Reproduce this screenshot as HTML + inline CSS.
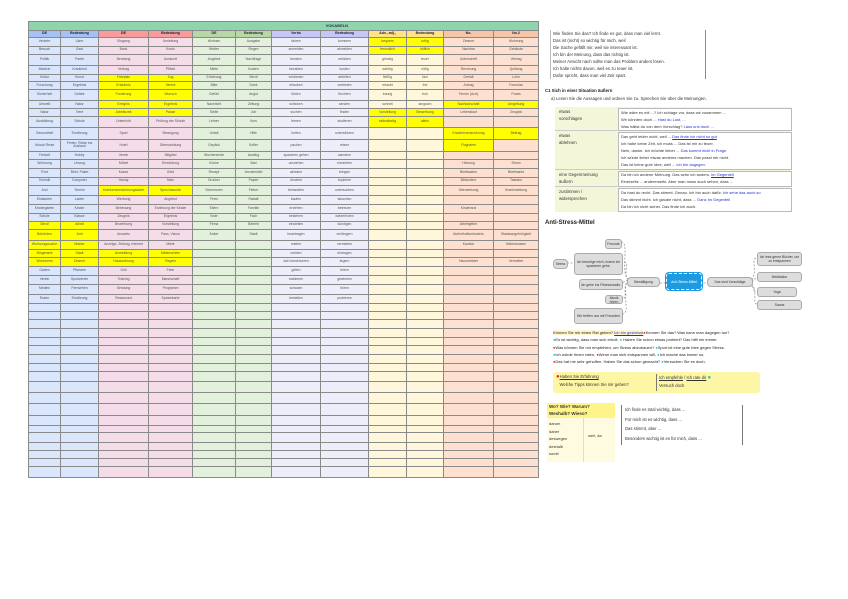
<!DOCTYPE html>
<html><head><meta charset="utf-8">
<style>
body{margin:0;width:848px;height:599px;background:#fff;position:relative;overflow:hidden;font-family:"Liberation Sans",sans-serif;}
#t{position:absolute;left:28px;top:21px;width:511px;border-collapse:collapse;table-layout:fixed;font-size:3.4px;color:#555;}
#t td{border:1px solid #8a8a8a;padding:0;text-align:center;overflow:hidden;line-height:1.1;}
#t tr.ti td{background:#8ed4ac;color:#335;font-weight:bold;font-size:4px;}
#t tr.h td{font-weight:bold;color:#223;font-size:3.6px}
.c0{background:#d9e6fb}.c1{background:#f4dde9}.c2{background:#e3f0dc}.c3{background:#eeeefb}.c4{background:#fff7dc}.c5{background:#fde0cf}
.h0{background:#a4c2f4!important}.h1{background:#f79b9b!important}.h2{background:#b7d8a6!important}.h3{background:#c5c8f6!important}.h4{background:#ffe28a!important}.h5{background:#f6c6aa!important}
#t td.y{background:#ffff00}
.ab{position:absolute;}
.tx{font-size:4.3px;color:#333;line-height:7px;white-space:nowrap}
.nd{position:absolute;background:#ddd;border:1px solid #aaa;border-radius:3px;font-size:3.4px;color:#333;text-align:center;display:flex;align-items:center;justify-content:center}
</style></head><body>
<table id="t">
<colgroup><col style="width:32px"><col style="width:38px"><col style="width:50px"><col style="width:44px"><col style="width:43px"><col style="width:36px"><col style="width:49px"><col style="width:48px"><col style="width:38px"><col style="width:37px"><col style="width:50px"><col style="width:45px"></colgroup>
<tr class="ti" style="height:8.7px"><td colspan="12" style="text-align:right;padding-right:190px">VOKABELN</td></tr>
<tr class="h" style="height:7.3px"><td class="h0">DE</td><td class="h0">Bedeutung</td><td class="h1">DE</td><td class="h1">Bedeutung</td><td class="h2">DE</td><td class="h2">Bedeutung</td><td class="h3">Verbs</td><td class="h3">Bedeutung</td><td class="h4">Adv., adj.,</td><td class="h4">Bedeutung</td><td class="h5">No.</td><td class="h5">No.2</td></tr>
<tr style="height:8.7px"><td class="c0">Verkehr</td><td class="c0">Lärm</td><td class="c1">Eingang</td><td class="c1">Umleitung</td><td class="c2">Wohnen</td><td class="c2">Ausgabe</td><td class="c3">fahren</td><td class="c3">kommen</td><td class="y">bequem</td><td class="y">ruhig</td><td class="c5">Zimmer</td><td class="c5">Wohnung</td></tr>
<tr style="height:8px"><td class="c0">Besuch</td><td class="c0">Gast</td><td class="c1">Bank</td><td class="c1">Konto</td><td class="c2">Wetter</td><td class="c2">Regen</td><td class="c3">anmelden</td><td class="c3">abmelden</td><td class="y">freundlich</td><td class="y">höflich</td><td class="c5">Nachbar</td><td class="c5">Gebäude</td></tr>
<tr style="height:11.3px"><td class="c0">Politik</td><td class="c0">Partei</td><td class="c1">Beratung</td><td class="c1">Auskunft</td><td class="c2">Angebot</td><td class="c2">Nachfrage</td><td class="c3">beraten</td><td class="c3">erklären</td><td class="c4">günstig</td><td class="c4">teuer</td><td class="c5">Unterschrift</td><td class="c5">Vertrag</td></tr>
<tr style="height:8.7px"><td class="c0">Medizin</td><td class="c0">Krankheit</td><td class="c1">Vertrag</td><td class="c1">Pflicht</td><td class="c2">Miete</td><td class="c2">Kosten</td><td class="c3">bezahlen</td><td class="c3">kosten</td><td class="c4">wichtig</td><td class="c4">nötig</td><td class="c5">Rechnung</td><td class="c5">Quittung</td></tr>
<tr style="height:7.3px"><td class="c0">Kultur</td><td class="c0">Kunst</td><td class="y">Fahrplan</td><td class="y">Zug</td><td class="c2">Erfahrung</td><td class="c2">Beruf</td><td class="c3">verdienen</td><td class="c3">arbeiten</td><td class="c4">fleißig</td><td class="c4">faul</td><td class="c5">Gehalt</td><td class="c5">Lohn</td></tr>
<tr style="height:8px"><td class="c0">Forschung</td><td class="c0">Ergebnis</td><td class="y">Erlaubnis</td><td class="y">Verbot</td><td class="c2">Bitte</td><td class="c2">Dank</td><td class="c3">erlauben</td><td class="c3">verbieten</td><td class="c4">erlaubt</td><td class="c4">frei</td><td class="c5">Antrag</td><td class="c5">Formular</td></tr>
<tr style="height:11px"><td class="c0">Sicherheit</td><td class="c0">Gefahr</td><td class="y">Forderung</td><td class="y">Wunsch</td><td class="c2">Gefühl</td><td class="c2">Angst</td><td class="c3">fühlen</td><td class="c3">fürchten</td><td class="c4">traurig</td><td class="c4">froh</td><td class="c5">Termin (Arzt)</td><td class="c5">Praxis</td></tr>
<tr style="height:8px"><td class="c0">Umwelt</td><td class="c0">Natur</td><td class="y">Ereignis</td><td class="y">Ergebnis</td><td class="c2">Nachricht</td><td class="c2">Zeitung</td><td class="c3">schicken</td><td class="c3">senden</td><td class="c4">schnell</td><td class="c4">langsam</td><td class="y">Nachbarschaft</td><td class="y">Umgebung</td></tr>
<tr style="height:8px"><td class="c0">Natur</td><td class="c0">Tiere</td><td class="y">Arbeitszeit</td><td class="y">Pause</td><td class="c2">Stelle</td><td class="c2">Job</td><td class="c3">suchen</td><td class="c3">finden</td><td class="y">Vorstellung</td><td class="y">Bewerbung</td><td class="c5">Lebenslauf</td><td class="c5">Zeugnis</td></tr>
<tr style="height:11.5px"><td class="c0">Ausbildung</td><td class="c0">Schule</td><td class="c1">Unterricht</td><td class="c1">Prüfung der Schule</td><td class="c2">Lehrer</td><td class="c2">Kurs</td><td class="c3">lernen</td><td class="c3">studieren</td><td class="y">selbständig</td><td class="y">allein</td><td class="c5"></td><td class="c5"></td></tr>
<tr style="height:11.8px"><td class="c0">Gesundheit</td><td class="c0">Ernährung</td><td class="c1">Sport</td><td class="c1">Bewegung</td><td class="c2">Unfall</td><td class="c2">Hilfe</td><td class="c3">helfen</td><td class="c3">unterstützen</td><td class="c4"></td><td class="c4"></td><td class="y">Krankenversicherung</td><td class="y">Beitrag</td></tr>
<tr style="height:11.4px"><td class="c0">Urlaub Reise</td><td class="c0">Ferien, Reise ins Ausland</td><td class="c1">Hotel</td><td class="c1">Übernachtung</td><td class="c2">Gepäck</td><td class="c2">Koffer</td><td class="c3">packen</td><td class="c3">reisen</td><td class="c4"></td><td class="c4"></td><td class="y">Flughafen</td><td class="c5"></td></tr>
<tr style="height:8.6px"><td class="c0">Freizeit</td><td class="c0">Hobby</td><td class="c1">Verein</td><td class="c1">Mitglied</td><td class="c2">Wochenende</td><td class="c2">Ausflug</td><td class="c3">spazieren gehen</td><td class="c3">wandern</td><td class="c4"></td><td class="c4"></td><td class="c5"></td><td class="c5"></td></tr>
<tr style="height:8.4px"><td class="c0">Wohnung</td><td class="c0">Umzug</td><td class="c1">Möbel</td><td class="c1">Einrichtung</td><td class="c2">Küche</td><td class="c2">Bad</td><td class="c3">umziehen</td><td class="c3">einrichten</td><td class="c4"></td><td class="c4"></td><td class="c5">Heizung</td><td class="c5">Strom</td></tr>
<tr style="height:9px"><td class="c0">Post</td><td class="c0">Brief, Paket</td><td class="c1">Kasse</td><td class="c1">Geld</td><td class="c2">Rezept</td><td class="c2">Arzneimittel</td><td class="c3">abholen</td><td class="c3">bringen</td><td class="c4"></td><td class="c4"></td><td class="c5">Briefkasten</td><td class="c5">Briefmarke</td></tr>
<tr style="height:8.3px"><td class="c0">Technik</td><td class="c0">Computer</td><td class="c1">Handy</td><td class="c1">Netz</td><td class="c2">Drucker</td><td class="c2">Papier</td><td class="c3">drucken</td><td class="c3">kopieren</td><td class="c4"></td><td class="c4"></td><td class="c5">Bildschirm</td><td class="c5">Tastatur</td></tr>
<tr style="height:10px"><td class="c0">Arzt</td><td class="c0">Termin</td><td class="y">Krankenversicherungskarte</td><td class="y">Sprechstunde</td><td class="c2">Schmerzen</td><td class="c2">Fieber</td><td class="c3">behandeln</td><td class="c3">untersuchen</td><td class="c4"></td><td class="c4"></td><td class="c5">Überweisung</td><td class="c5">Krankmeldung</td></tr>
<tr style="height:9px"><td class="c0">Einkaufen</td><td class="c0">Laden</td><td class="c1">Werbung</td><td class="c1">Angebot</td><td class="c2">Preis</td><td class="c2">Rabatt</td><td class="c3">kaufen</td><td class="c3">tauschen</td><td class="c4"></td><td class="c4"></td><td class="c5"></td><td class="c5"></td></tr>
<tr style="height:8.7px"><td class="c0">Kindergarten</td><td class="c0">Kinder</td><td class="c1">Betreuung</td><td class="c1">Erziehung der Kinder</td><td class="c2">Eltern</td><td class="c2">Familie</td><td class="c3">erziehen</td><td class="c3">betreuen</td><td class="c4"></td><td class="c4"></td><td class="c5">Kinderarzt</td><td class="c5"></td></tr>
<tr style="height:8px"><td class="c0">Schule</td><td class="c0">Klasse</td><td class="c1">Zeugnis</td><td class="c1">Ergebnis</td><td class="c2">Note</td><td class="c2">Fach</td><td class="c3">bestehen</td><td class="c3">wiederholen</td><td class="c4"></td><td class="c4"></td><td class="c5"></td><td class="c5"></td></tr>
<tr style="height:8.3px"><td class="y">Beruf</td><td class="y">Arbeit</td><td class="c1">Bewerbung</td><td class="c1">Vorstellung</td><td class="c2">Firma</td><td class="c2">Betrieb</td><td class="c3">einstellen</td><td class="c3">kündigen</td><td class="c4"></td><td class="c4"></td><td class="c5">Arbeitgeber</td><td class="c5"></td></tr>
<tr style="height:11px"><td class="y">Behörden</td><td class="y">Amt</td><td class="c1">Ausweis</td><td class="c1">Pass, Visum</td><td class="c2">Ämter</td><td class="c2">Stadt</td><td class="c3">beantragen</td><td class="c3">verlängern</td><td class="c4"></td><td class="c4"></td><td class="c5">Aufenthaltserlaubnis</td><td class="c5">Staatsangehörigkeit</td></tr>
<tr style="height:9px"><td class="y">Wohnungssuche</td><td class="y">Makler</td><td class="c1">Anzeige, Zeitung, Internet</td><td class="c1">Miete</td><td class="c2"></td><td class="c2"></td><td class="c3">mieten</td><td class="c3">vermieten</td><td class="c4"></td><td class="c4"></td><td class="c5">Kaution</td><td class="c5">Nebenkosten</td></tr>
<tr style="height:8px"><td class="y">Bürgeramt</td><td class="y">Stadt</td><td class="y">Anmeldung</td><td class="y">Meldeschein</td><td class="c2"></td><td class="c2"></td><td class="c3">melden</td><td class="c3">eintragen</td><td class="c4"></td><td class="c4"></td><td class="c5"></td><td class="c5"></td></tr>
<tr style="height:9px"><td class="y">Wohnheim</td><td class="y">Zimmer</td><td class="y">Hausordnung</td><td class="y">Regeln</td><td class="c2"></td><td class="c2"></td><td class="c3">sich beschweren</td><td class="c3">ärgern</td><td class="c4"></td><td class="c4"></td><td class="c5">Hausmeister</td><td class="c5">Vermieter</td></tr>
<tr style="height:9px"><td class="c0">Garten</td><td class="c0">Pflanzen</td><td class="c1">Grill</td><td class="c1">Feier</td><td class="c2"></td><td class="c2"></td><td class="c3">grillen</td><td class="c3">feiern</td><td class="c4"></td><td class="c4"></td><td class="c5"></td><td class="c5"></td></tr>
<tr style="height:9px"><td class="c0">Verein</td><td class="c0">Sportverein</td><td class="c1">Training</td><td class="c1">Mannschaft</td><td class="c2"></td><td class="c2"></td><td class="c3">trainieren</td><td class="c3">gewinnen</td><td class="c4"></td><td class="c4"></td><td class="c5"></td><td class="c5"></td></tr>
<tr style="height:9.7px"><td class="c0">Medien</td><td class="c0">Fernsehen</td><td class="c1">Sendung</td><td class="c1">Programm</td><td class="c2"></td><td class="c2"></td><td class="c3">schauen</td><td class="c3">hören</td><td class="c4"></td><td class="c4"></td><td class="c5"></td><td class="c5"></td></tr>
<tr style="height:9.3px"><td class="c0">Essen</td><td class="c0">Ernährung</td><td class="c1">Restaurant</td><td class="c1">Speisekarte</td><td class="c2"></td><td class="c2"></td><td class="c3">bestellen</td><td class="c3">probieren</td><td class="c4"></td><td class="c4"></td><td class="c5"></td><td class="c5"></td></tr>
<tr style="height:8px"><td class="c0"></td><td class="c0"></td><td class="c1"></td><td class="c1"></td><td class="c2"></td><td class="c2"></td><td class="c3"></td><td class="c3"></td><td class="c4"></td><td class="c4"></td><td class="c5"></td><td class="c5"></td></tr>
<tr style="height:8px"><td class="c0"></td><td class="c0"></td><td class="c1"></td><td class="c1"></td><td class="c2"></td><td class="c2"></td><td class="c3"></td><td class="c3"></td><td class="c4"></td><td class="c4"></td><td class="c5"></td><td class="c5"></td></tr>
<tr style="height:9px"><td class="c0"></td><td class="c0"></td><td class="c1"></td><td class="c1"></td><td class="c2"></td><td class="c2"></td><td class="c3"></td><td class="c3"></td><td class="c4"></td><td class="c4"></td><td class="c5"></td><td class="c5"></td></tr>
<tr style="height:8.7px"><td class="c0"></td><td class="c0"></td><td class="c1"></td><td class="c1"></td><td class="c2"></td><td class="c2"></td><td class="c3"></td><td class="c3"></td><td class="c4"></td><td class="c4"></td><td class="c5"></td><td class="c5"></td></tr>
<tr style="height:8.3px"><td class="c0"></td><td class="c0"></td><td class="c1"></td><td class="c1"></td><td class="c2"></td><td class="c2"></td><td class="c3"></td><td class="c3"></td><td class="c4"></td><td class="c4"></td><td class="c5"></td><td class="c5"></td></tr>
<tr style="height:9px"><td class="c0"></td><td class="c0"></td><td class="c1"></td><td class="c1"></td><td class="c2"></td><td class="c2"></td><td class="c3"></td><td class="c3"></td><td class="c4"></td><td class="c4"></td><td class="c5"></td><td class="c5"></td></tr>
<tr style="height:8.7px"><td class="c0"></td><td class="c0"></td><td class="c1"></td><td class="c1"></td><td class="c2"></td><td class="c2"></td><td class="c3"></td><td class="c3"></td><td class="c4"></td><td class="c4"></td><td class="c5"></td><td class="c5"></td></tr>
<tr style="height:8.3px"><td class="c0"></td><td class="c0"></td><td class="c1"></td><td class="c1"></td><td class="c2"></td><td class="c2"></td><td class="c3"></td><td class="c3"></td><td class="c4"></td><td class="c4"></td><td class="c5"></td><td class="c5"></td></tr>
<tr style="height:9.7px"><td class="c0"></td><td class="c0"></td><td class="c1"></td><td class="c1"></td><td class="c2"></td><td class="c2"></td><td class="c3"></td><td class="c3"></td><td class="c4"></td><td class="c4"></td><td class="c5"></td><td class="c5"></td></tr>
<tr style="height:11.3px"><td class="c0"></td><td class="c0"></td><td class="c1"></td><td class="c1"></td><td class="c2"></td><td class="c2"></td><td class="c3"></td><td class="c3"></td><td class="c4"></td><td class="c4"></td><td class="c5"></td><td class="c5"></td></tr>
<tr style="height:10.7px"><td class="c0"></td><td class="c0"></td><td class="c1"></td><td class="c1"></td><td class="c2"></td><td class="c2"></td><td class="c3"></td><td class="c3"></td><td class="c4"></td><td class="c4"></td><td class="c5"></td><td class="c5"></td></tr>
<tr style="height:12px"><td class="c0"></td><td class="c0"></td><td class="c1"></td><td class="c1"></td><td class="c2"></td><td class="c2"></td><td class="c3"></td><td class="c3"></td><td class="c4"></td><td class="c4"></td><td class="c5"></td><td class="c5"></td></tr>
<tr style="height:10.3px"><td class="c0"></td><td class="c0"></td><td class="c1"></td><td class="c1"></td><td class="c2"></td><td class="c2"></td><td class="c3"></td><td class="c3"></td><td class="c4"></td><td class="c4"></td><td class="c5"></td><td class="c5"></td></tr>
<tr style="height:7px"><td class="c0"></td><td class="c0"></td><td class="c1"></td><td class="c1"></td><td class="c2"></td><td class="c2"></td><td class="c3"></td><td class="c3"></td><td class="c4"></td><td class="c4"></td><td class="c5"></td><td class="c5"></td></tr>
<tr style="height:10px"><td class="c0"></td><td class="c0"></td><td class="c1"></td><td class="c1"></td><td class="c2"></td><td class="c2"></td><td class="c3"></td><td class="c3"></td><td class="c4"></td><td class="c4"></td><td class="c5"></td><td class="c5"></td></tr>
<tr style="height:8px"><td class="c0"></td><td class="c0"></td><td class="c1"></td><td class="c1"></td><td class="c2"></td><td class="c2"></td><td class="c3"></td><td class="c3"></td><td class="c4"></td><td class="c4"></td><td class="c5"></td><td class="c5"></td></tr>
<tr style="height:7.7px"><td class="c0"></td><td class="c0"></td><td class="c1"></td><td class="c1"></td><td class="c2"></td><td class="c2"></td><td class="c3"></td><td class="c3"></td><td class="c4"></td><td class="c4"></td><td class="c5"></td><td class="c5"></td></tr>
<tr style="height:8px"><td class="c0"></td><td class="c0"></td><td class="c1"></td><td class="c1"></td><td class="c2"></td><td class="c2"></td><td class="c3"></td><td class="c3"></td><td class="c4"></td><td class="c4"></td><td class="c5"></td><td class="c5"></td></tr>
<tr style="height:11px"><td class="c0"></td><td class="c0"></td><td class="c1"></td><td class="c1"></td><td class="c2"></td><td class="c2"></td><td class="c3"></td><td class="c3"></td><td class="c4"></td><td class="c4"></td><td class="c5"></td><td class="c5"></td></tr>
</table>

<!-- right top text -->
<div class="ab tx" style="left:550px;top:30px;width:152px;border-right:1px solid #888;border-left:1px solid #bbb;padding-left:2px">
Wie finden Sie das? Ich finde es gut, dass man viel lernt.<br>Das ist (nicht) so wichtig für mich, weil<br>Die Sache gefällt mir, weil sie interessant ist.<br>Ich bin der Meinung, dass das richtig ist.<br>Meiner Ansicht nach sollte man das Problem anders lösen.<br>Ich halte nichts davon, weil es zu teuer ist.<br>Dafür spricht, dass man viel Zeit spart.</div>
<div class="ab tx" style="left:545px;top:87px;font-weight:bold;color:#222">C1 Sich in einer Situation äußern</div>
<div class="ab tx" style="left:551px;top:95px;color:#333">a) Lesen Sie die Aussagen und ordnen Sie zu. Sprechen Sie über die Meinungen.</div>

<div class="ab" style="left:555px;top:107px;width:237px;height:105px;background:#f4f6da">
<div class="ab" style="left:63px;top:1px;width:172px;height:21px;background:#fff;border:1px solid #bbb"></div>
<div class="ab" style="left:63px;top:25px;width:172px;height:36px;background:#fff;border:1px solid #bbb"></div>
<div class="ab" style="left:63px;top:64px;width:172px;height:14px;background:#fff;border:1px solid #bbb"></div>
<div class="ab" style="left:63px;top:81px;width:172px;height:22px;background:#fff;border:1px solid #bbb"></div>
<div class="ab" style="left:0;top:23px;width:63px;border-top:1px solid #ccc"></div>
<div class="ab" style="left:0;top:62px;width:63px;border-top:1px solid #ccc"></div>
<div class="ab" style="left:0;top:79px;width:63px;border-top:1px solid #ccc"></div>
<div class="ab tx" style="left:4px;top:1px">etwas<br>vorschlagen</div>
<div class="ab tx" style="left:4px;top:25px">etwas<br>ablehnen</div>
<div class="ab tx" style="left:4px;top:64px">eine Gegenmeinung<br>äußern</div>
<div class="ab tx" style="left:4px;top:81px">zustimmen /<br>widersprechen</div>
<div class="ab tx" style="left:66px;top:2px;font-size:4px">Wie wäre es mit ...? Ich schlage vor, dass wir zusammen ...<br>Wir könnten doch ... <span style="color:#23c">Hast du Lust, ...</span><br>Was hältst du von dem Vorschlag? <span style="color:#23c">Lass uns doch ...</span></div>
<div class="ab tx" style="left:66px;top:26px;font-size:4px">Das geht leider nicht, weil ... <span style="color:#23c;text-decoration:underline">Das finde ich nicht so gut</span><br>Ich habe keine Zeit, ich muss ... Das ist mir zu teuer.<br>Nein, danke. Ich möchte lieber ... <span style="color:#23c">Das kommt nicht in Frage</span><br>Ich würde lieber etwas anderes machen. Das passt mir nicht.<br>Das ist keine gute Idee, weil ... <span style="color:#23c">Ich bin dagegen.</span></div>
<div class="ab tx" style="left:66px;top:64px;font-size:4px">Da bin ich anderer Meinung. Das sehe ich anders. <span style="color:#23c;text-decoration:underline">Im Gegenteil</span><br>Einerseits ... andererseits. Aber man muss auch sehen, dass ...</div>
<div class="ab tx" style="left:66px;top:82px;font-size:4px">Da hast du recht. Das stimmt. Genau. Ich bin auch dafür. <span style="color:#23c">Ich sehe das auch so</span><br>Das stimmt nicht. Ich glaube nicht, dass ... <span style="color:#23c">Ganz im Gegenteil</span><br>Da bin ich nicht sicher. Das finde ich auch.</div>
</div>

<div class="ab" style="left:545px;top:220px;font-size:6px;font-weight:bold;color:#222">Anti-Stress-Mittel</div>

<svg class="ab" style="left:540px;top:230px" width="270" height="100">
<g fill="none" stroke="#999" stroke-width="0.8" stroke-dasharray="2,1.5">
<path d="M88 50 C 80 40, 90 12, 81 12"/><path d="M88 50 C 82 40, 92 32, 82 32"/><path d="M88 50 L82 53"/><path d="M88 50 C 82 60, 90 68, 82 68"/><path d="M88 50 C 80 60, 92 84, 82 84"/>
<path d="M120 53 L126 53"/><path d="M160 53 L167 53"/>
<path d="M212 50 C 218 40, 210 28, 217 28"/><path d="M212 52 L217 47"/><path d="M212 54 C 216 58, 212 62, 217 62"/><path d="M212 56 C 218 64, 212 74, 217 74"/>
<path d="M27 33 L34 33"/>
</g></svg>
<div class="nd" style="left:605px;top:239px;width:15px;height:8px">Freunde</div>
<div class="nd" style="left:574px;top:253px;width:47px;height:20px">Ich beruhige mich, indem ich spazieren gehe.</div>
<div class="nd" style="left:553px;top:259px;width:13px;height:8px;border-radius:4px">Stress</div>
<div class="nd" style="left:579px;top:279px;width:42px;height:9px">Ich gehe ins Fitnessstudio.</div>
<div class="nd" style="left:605px;top:295px;width:16px;height:7px">Musik hören</div>
<div class="nd" style="left:574px;top:308px;width:47px;height:14px">Wir treffen uns mit Freunden</div>
<div class="nd" style="left:627px;top:277px;width:31px;height:8px;border-radius:4px">Bewältigung</div>
<div class="nd" style="left:666px;top:273px;width:34px;height:15px;background:#1e9be0;border:1px dashed #fff;color:#fff;outline:1px solid #1e9be0">Anti-Stress-Mittel</div>
<div class="nd" style="left:707px;top:277px;width:44px;height:8px;border-radius:4px">Das sind Vorschläge</div>
<div class="nd" style="left:757px;top:252px;width:43px;height:12px">Ich lese gerne Bücher, um zu entspannen</div>
<div class="nd" style="left:757px;top:272px;width:43px;height:8px">Meditation</div>
<div class="nd" style="left:757px;top:287px;width:38px;height:8px">Yoga</div>
<div class="nd" style="left:757px;top:300px;width:43px;height:8px">Sauna</div>

<div class="ab tx" style="left:553px;top:329px;font-size:4px;line-height:7.3px;color:#222">
<span style="background:#fff6d0">Können Sie mir einen Rat geben? <u style="color:#23c">Ich bin gestresst</u></span><span style="color:#e22">●</span>Kennen Sie das? Was kann man dagegen tun?<br>
<span style="color:#2bd">●</span>Es ist wichtig, dass man sich erholt. <span style="color:#2bd">●</span> Haben Sie schon etwas probiert? Das hilft mir immer.<br>
<span style="color:#e22">●</span>Was können Sie mir empfehlen, um Stress abzubauen? <span style="color:#2bd">●</span>Sport ist eine gute Idee gegen Stress.<br>
<span style="color:#2bd">●</span>Ich würde Ihnen raten, <span style="color:#e22">●</span>Wenn man sich entspannen will, <span style="color:#2bd">●</span>Ich mache das immer so.<br>
<span style="color:#e22">●</span>Das hat mir sehr geholfen. Haben Sie das schon gemacht? <span style="color:#2bd">●</span>Versuchen Sie es doch.</div>

<div class="ab" style="left:553px;top:372px;width:207px;height:21px;background:#fdf6a4;border-radius:3px"></div>
<div class="ab tx" style="left:556px;top:373px;font-size:4.2px;line-height:7px"><span style="color:#e22;font-size:6px">●</span><u>Haben Sie Erfahrung</u><br>&nbsp;&nbsp;&nbsp;Welche Tipps können Sie mir geben?</div>
<div class="ab" style="left:656px;top:374px;height:17px;border-left:1px solid #777"></div>
<div class="ab tx" style="left:659px;top:374px;font-size:4.2px;line-height:7px"><u>Ich empfehle</u> / <u>Ich rate dir</u> <span style="color:#2bd;font-size:6px">●</span><br>Versuch doch</div>

<div class="ab" style="left:547px;top:403px;width:68px;height:15px;background:#fff48a"></div>
<div class="ab" style="left:547px;top:418px;width:68px;height:44px;background:#fffbe0"></div>
<div class="ab" style="left:583px;top:418px;height:44px;border-left:1px solid #ddd"></div>
<div class="ab tx" style="left:549px;top:403px;font-size:4.5px;line-height:7px;font-weight:bold;color:#333">Wo? Wie? Warum?<br>Weshalb? Wieso?</div>
<div class="ab tx" style="left:549px;top:420px;font-size:4px;line-height:7.5px">darum<br>daher<br>deswegen<br>deshalb<br>somit</div>
<div class="ab tx" style="left:588px;top:432px;font-size:4px">weil, da</div>
<div class="ab" style="left:621px;top:405px;width:120px;height:40px;border-left:1px solid #777;border-right:1px solid #777"></div>
<div class="ab tx" style="left:625px;top:405px;font-size:4.2px;line-height:9.5px">Ich finde es total wichtig, dass ...<br>Für mich ist es wichtig, dass ...<br>Das stimmt, aber ...<br>Besonders wichtig ist es für mich, dass ...</div>
</body></html>
